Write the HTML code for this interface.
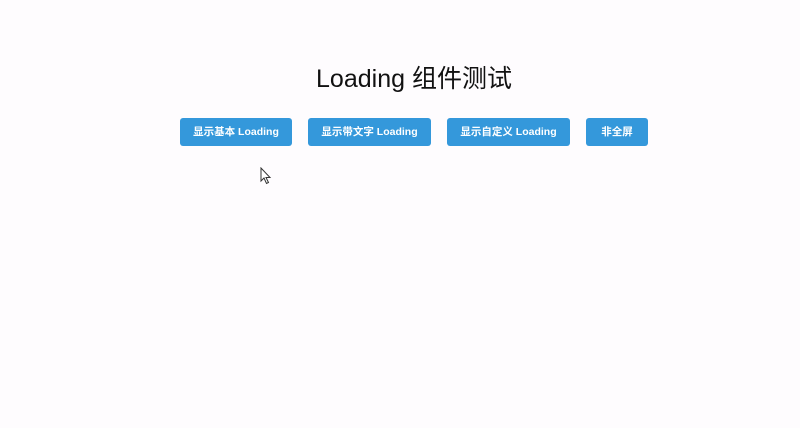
<!DOCTYPE html>
<html><head><meta charset="utf-8"><style>
html,body{margin:0;padding:0;width:800px;height:428px;background:#fefcfe;overflow:hidden;font-family:"Liberation Sans","Noto Sans CJK SC",sans-serif;}
h1{position:absolute;left:0;width:828px;top:61px;margin:0;text-align:center;font-weight:normal;font-size:25px;line-height:36px;color:#111;}
.b{position:absolute;top:118px;height:28px;background:#3498db;color:#fff;border-radius:3px;font-size:10.5px;font-weight:bold;line-height:28px;text-align:center;}
</style></head><body>
<h1>Loading 组件测试</h1>
<div class="b" style="left:180px;width:112px">显示基本 Loading</div>
<div class="b" style="left:308px;width:123px">显示带文字 Loading</div>
<div class="b" style="left:447px;width:123px">显示自定义 Loading</div>
<div class="b" style="left:586px;width:62px">非全屏</div>
<svg style="position:absolute;left:260px;top:167px" width="12" height="18" viewBox="0 0 12 18"><path d="M1 1 L1 14 L4 11 L6.5 16.5 L8.5 15.5 L6 10.5 L10 10.5 Z" fill="#fff" stroke="#333" stroke-width="1"/></svg>
</body></html>
